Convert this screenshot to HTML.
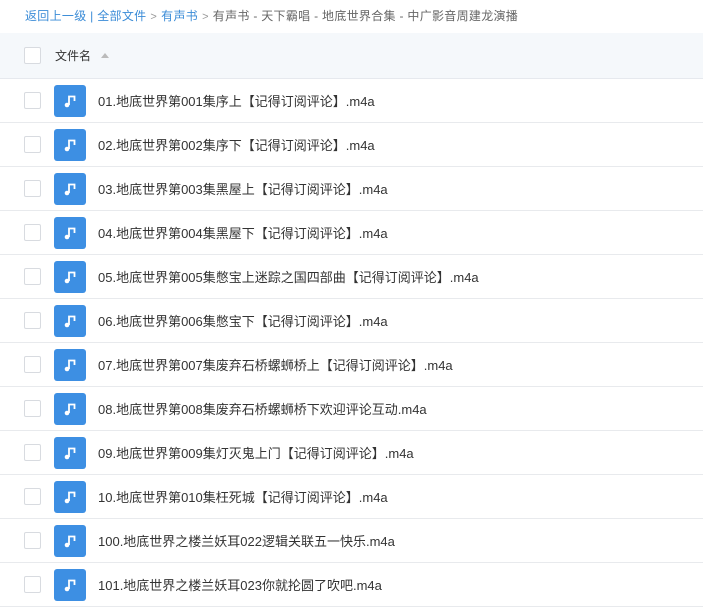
<!DOCTYPE html>
<html><head><meta charset="utf-8"><style>
body{margin:0;width:703px;height:601px;overflow:hidden;background:#fff;font-family:"Liberation Sans","Noto Sans CJK SC",sans-serif;}
.bc{position:absolute;left:25px;top:7px;font-size:12px;letter-spacing:0.3px;color:#666;white-space:nowrap;line-height:18px}
.bc a{color:#3b8cd7;text-decoration:none}
.bc .g{color:#999;margin:0 4px;font-size:11px}
.hd{position:absolute;left:0;top:33px;width:703px;height:45px;background:#f5f8fb;border-bottom:1px solid #e6e9ee}
.cb{position:absolute;left:24px;width:15px;height:15px;border:1px solid #d8dbe0;border-radius:2px;background:#fff}
.hd .t{position:absolute;left:55px;top:14px;font-size:12px;color:#333}
.tri{position:absolute;left:101px;top:20px;width:0;height:0;border-left:4px solid transparent;border-right:4px solid transparent;border-bottom:5px solid #bbb}
.row{position:absolute;left:0;width:703px;height:43px;border-bottom:1px solid #e8eaed}
.ic{position:absolute;left:54px;top:6px;width:32px;height:32px;background:#3d8fe3;border-radius:3px}
.ic svg{position:absolute;left:8px;top:8px}
.nm{position:absolute;left:98px;top:12px;font-size:13px;color:#333;white-space:nowrap}
</style></head><body>
<div class="bc"><a>返回上一级</a> <span style="color:#3b8cd7">|</span> <a>全部文件</a><span class="g">&gt;</span><a>有声书</a><span class="g">&gt;</span>有声书 - 天下霸唱 - 地底世界合集 - 中广影音周建龙演播</div>
<div class="hd"><div class="cb" style="top:14px"></div><div class="t">文件名</div><div class="tri"></div></div>
<div id="rows"></div>
<script>
var n=["01.地底世界第001集序上【记得订阅评论】.m4a","02.地底世界第002集序下【记得订阅评论】.m4a","03.地底世界第003集黑屋上【记得订阅评论】.m4a","04.地底世界第004集黑屋下【记得订阅评论】.m4a","05.地底世界第005集憋宝上迷踪之国四部曲【记得订阅评论】.m4a","06.地底世界第006集憋宝下【记得订阅评论】.m4a","07.地底世界第007集废弃石桥螺蛳桥上【记得订阅评论】.m4a","08.地底世界第008集废弃石桥螺蛳桥下欢迎评论互动.m4a","09.地底世界第009集灯灭鬼上门【记得订阅评论】.m4a","10.地底世界第010集枉死城【记得订阅评论】.m4a","100.地底世界之楼兰妖耳022逻辑关联五一快乐.m4a","101.地底世界之楼兰妖耳023你就抡圆了吹吧.m4a"];
var h="";n.forEach(function(s,i){h+='<div class="row" style="top:'+(79+i*44)+'px"><div class="cb" style="top:13px"></div><div class="ic"><svg width="16" height="16" viewBox="0 0 16 16"><path d="M7 12V3.5h5.5V8" fill="none" stroke="#fff" stroke-width="1.8"/><circle cx="5" cy="12" r="2.3" fill="#fff"/></svg></div><div class="nm">'+s+'</div></div>'});
document.getElementById("rows").innerHTML=h;
</script>
</body></html>
